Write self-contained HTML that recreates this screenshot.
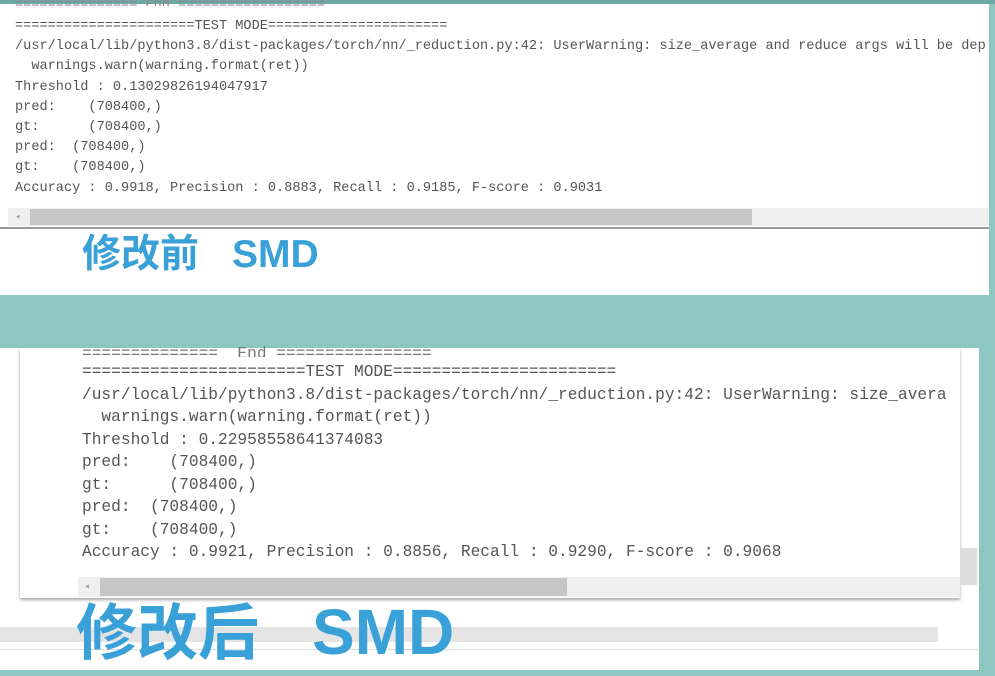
<!DOCTYPE html>
<html><head><meta charset="utf-8"><style>
*{margin:0;padding:0;box-sizing:border-box}
body{width:995px;height:676px;overflow:hidden;background:#8ec6c1;position:relative;font-family:"Liberation Mono",monospace}
.abs{position:absolute}
.t1{left:15px;font-size:13.6px;color:#555;white-space:pre;line-height:20.2px}
.t2{left:82px;font-size:16.2px;color:#555;white-space:pre;line-height:22.5px}
.cn{font-family:"Liberation Sans","Noto Sans CJK SC",sans-serif;font-weight:bold;color:#3aa0d8;white-space:pre}
</style></head><body>
<div class="abs" style="left:0;top:0;width:995px;height:4px;background:#6fa6a8"></div>
<div class="abs" style="left:0;top:4px;width:989px;height:291px;background:#fff"></div>
<div class="abs t1" style="top:-4px;overflow:hidden;height:10px;color:#888">=============== End ==================</div>
<div class="abs t1" style="top:17px">======================TEST MODE======================
/usr/local/lib/python3.8/dist-packages/torch/nn/_reduction.py:42: UserWarning: size_average and reduce args will be dep
  warnings.warn(warning.format(ret))
Threshold : 0.13029826194047917
pred:    (708400,)
gt:      (708400,)
pred:  (708400,)
gt:    (708400,)
Accuracy : 0.9918, Precision : 0.8883, Recall : 0.9185, F-score : 0.9031</div>
<div class="abs" style="left:8px;top:208px;width:981px;height:18px;background:#eee"></div>
<div class="abs" style="left:15px;top:212px;color:#999;font-size:9px">◂</div>
<div class="abs" style="left:30px;top:209px;width:722px;height:16px;background:#c6c6c6"></div>
<div class="abs" style="left:0;top:227px;width:989px;height:2px;background:#999"></div>
<div class="abs cn" style="left:82px;top:230px;font-size:39px;line-height:50px">修改前</div>
<div class="abs cn" style="left:232px;top:230px;font-size:39px;line-height:50px">SMD</div>

<div class="abs" style="left:0;top:348px;width:979px;height:322px;background:#fff"></div>
<div class="abs" style="left:20px;top:348px;width:940px;height:250px;background:#fff;box-shadow:0 2px 3px rgba(0,0,0,.35)"></div>
<div class="abs t2" style="top:343px;overflow:hidden;height:14px;width:870px;color:#777">==============  End ================</div>
<div class="abs t2" style="top:361px;width:878px;overflow:hidden">=======================TEST MODE=======================
/usr/local/lib/python3.8/dist-packages/torch/nn/_reduction.py:42: UserWarning: size_avera
  warnings.warn(warning.format(ret))
Threshold : 0.22958558641374083
pred:    (708400,)
gt:      (708400,)
pred:  (708400,)
gt:    (708400,)
Accuracy : 0.9921, Precision : 0.8856, Recall : 0.9290, F-score : 0.9068</div>
<div class="abs" style="left:78px;top:577px;width:882px;height:20px;background:#efefef"></div>
<div class="abs" style="left:84px;top:581px;color:#999;font-size:10px">◂</div>
<div class="abs" style="left:100px;top:578px;width:467px;height:18px;background:#c6c6c6"></div>
<div class="abs" style="left:960px;top:548px;width:17px;height:37px;background:#ddd"></div>
<div class="abs" style="left:0;top:627px;width:938px;height:15px;background:#e4e4e4"></div>
<div class="abs" style="left:0;top:649px;width:979px;height:1px;background:#ddd"></div>
<div class="abs cn" style="left:76px;top:598px;font-size:61px;line-height:70px">修改后</div>
<div class="abs cn" style="left:312px;top:596px;font-size:64px;line-height:72px">SMD</div>
<div class="abs" style="left:0;top:670px;width:995px;height:6px;background:#8ec6c1"></div>
</body></html>
